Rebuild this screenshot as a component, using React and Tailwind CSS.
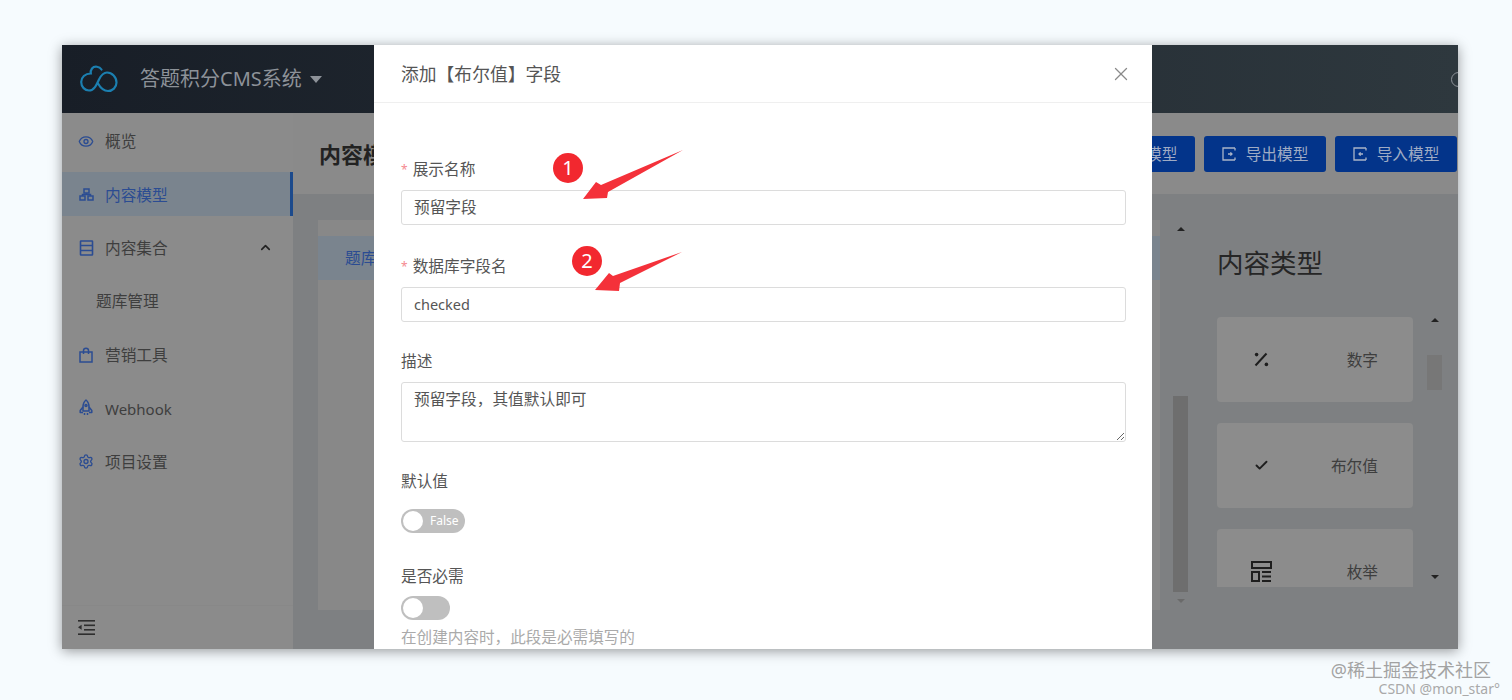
import React from "react";
import { Eye, ChevronUp, Settings, X, Check } from "lucide-react";

const sideFont = "font-['Noto_Sans','Noto_Sans_CJK_SC',sans-serif]";

const CloudLogo = () => (
  <svg width="38" height="28" viewBox="0 0 38 28" fill="none" stroke="#1b7fb0" strokeWidth="2.2" strokeLinecap="round">
    <path d="M21.5 4.5C19.5 1.5 14.5 0.5 12 3.5C10.5 5.5 10.5 7 10.8 8.5C5 8.5 1.2 12.5 1.2 17C1.2 22 5 25.5 9 25.5C14 25.5 16.5 20 19 14.5C21 10.5 23.5 7.5 27 7.5C32 7.5 36.5 12 36.5 17.5C36.5 22.5 32.5 26 28 26C23.5 26 20 22 18 18.5" />
  </svg>
);

const SitemapIcon = () => (
  <svg width="15" height="13" viewBox="0 0 15 13" fill="none" stroke="#2b4c92" strokeWidth="1.5">
    <rect x="5" y="1" width="5" height="4" />
    <rect x="1" y="8" width="5" height="4" />
    <rect x="9" y="8" width="5" height="4" />
    <path d="M7.5 5V6.5H3.5V8M7.5 6.5H11.5V8" />
  </svg>
);

const ListBoxIcon = () => (
  <svg width="15" height="16" viewBox="0 0 15 16" fill="none" stroke="#2b4c92" strokeWidth="1.6">
    <rect x="1.5" y="1" width="12" height="14" rx="0.5" />
    <path d="M1.5 5.5H13.5M1.5 10.5H13.5" />
  </svg>
);

const BagIcon = () => (
  <svg width="14" height="16" viewBox="0 0 14 16" fill="none" stroke="#2b4c92" strokeWidth="1.5">
    <rect x="1" y="5" width="12" height="10" />
    <path d="M4.5 7V3.5C4.5 0.5 9.5 0.5 9.5 3.5V7" />
  </svg>
);

const RocketIcon = () => (
  <svg width="14" height="17" viewBox="0 0 14 17" fill="none" stroke="#2b4c92" strokeWidth="1.5" strokeLinejoin="round">
    <path d="M7 1C9.5 3 10 5.5 10 8V12H4V8C4 5.5 4.5 3 7 1Z" />
    <path d="M4 8L1.2 11.5V13.5H4M10 8L12.8 11.5V13.5H10" />
    <path d="M5.5 14V16M8.5 14V16" />
    <circle cx="7" cy="6.5" r="1" />
  </svg>
);

const CollapseIcon = () => (
  <svg width="17" height="15" viewBox="0 0 17 15" fill="#2e2e2e">
    <rect x="0" y="0" width="17" height="1.6" />
    <rect x="6" y="4.5" width="11" height="1.6" />
    <rect x="6" y="9" width="11" height="1.6" />
    <rect x="0" y="13.4" width="17" height="1.6" />
    <path d="M0 7.3L3.6 4.8V9.8Z" />
  </svg>
);

const ExportIcon = ({ flip }) => (
  <svg width="14" height="14" viewBox="0 0 14 14" fill="none" stroke="#aab4c8" strokeWidth="1.3">
    <path d="M13 1H1V13H13M13 1V3.4M13 13V10.6" />
    {flip ? <path d="M10 7H6M7.6 5.4L6 7L7.6 8.6" /> : <path d="M6 7H10M8.4 5.4L10 7L8.4 8.6" />}
  </svg>
);

const PercentIcon = () => (
  <svg width="15" height="15" viewBox="0 0 15 15" fill="#1e1e1e">
    <path d="M1.5 13.5L12.5 1.5" stroke="#1e1e1e" strokeWidth="2" fill="none" />
    <circle cx="2.6" cy="2.6" r="1.8" />
    <circle cx="12.4" cy="12.4" r="1.8" />
  </svg>
);

const EnumIcon = () => (
  <svg width="21" height="21" viewBox="0 0 21 21" fill="none" stroke="#1e1e1e" strokeWidth="2">
    <rect x="1" y="1" width="19" height="6" />
    <rect x="1" y="11" width="7" height="9" />
    <path d="M11 11H20M11 15.5H20M11 20H20" />
  </svg>
);

const sideItems = [
  { label: "概览", icon: <Eye size={17} color="#2b4c92" /> },
  { label: "内容模型", icon: <SitemapIcon />, active: true },
  { label: "内容集合", icon: <ListBoxIcon />, open: true },
  { label: "题库管理", sub: true },
  { label: "营销工具", icon: <BagIcon /> },
  { label: "Webhook", icon: <RocketIcon />, latin: true },
  { label: "项目设置", icon: <Settings size={17} color="#2b4c92" /> },
];

const typeCards = [
  { label: "数字", icon: <PercentIcon /> },
  { label: "布尔值", icon: <Check size={15} color="#1e1e1e" strokeWidth={3} /> },
  { label: "枚举", icon: <EnumIcon /> },
];

const Triangle = ({ down, className }) => (
  <div
    className={
      "w-0 h-0 border-x-[4px] border-x-transparent " +
      (down ? "border-t-[4px] " : "border-b-[4px] ") +
      className
    }
  />
);

const Field = ({ label, required, className, children }) => (
  <div className={className}>
    <div className="flex items-center h-[22px] pt-[2px] text-[15.7px] text-[#555]">
      {required && <span className="text-[#f58a90] mr-[5px] text-[12px] leading-none">*</span>}
      <label>{label}</label>
    </div>
    {children}
  </div>
);

const inputClass =
  "block w-full h-[35px] mt-[10px] px-[12px] pb-[2px] border border-[#dcdcdc] rounded-[3px] text-[#555] bg-white outline-none";

const Sidebar = () => (
  <aside className="w-[231px] shrink-0 bg-[#8b8b8b] flex flex-col">
    <nav className="flex-1 flex flex-col gap-[9.4px] pt-[6px]">
      {sideItems.map((item) => (
        <div
          key={item.label}
          className={
            "h-[44px] flex items-center " +
            (item.latin ? "text-[15px] " : "text-[15.7px] ") +
            (item.active
              ? "bg-[#7a848e] border-r-[3px] border-[#1c4a8c] text-[#2b4c92] pl-[16px] pr-[20px]"
              : "text-[#3e3e3e] " + (item.sub ? "pl-[34px] pr-[20px]" : "pl-[16px] pr-[20px]"))
          }
        >
          {item.icon && <span className="w-[16px] flex justify-center mr-[11px]">{item.icon}</span>}
          <span className="pt-[2px]">{item.label}</span>
          {item.open && <ChevronUp size={15} color="#222" strokeWidth={2.6} className="ml-auto" />}
        </div>
      ))}
    </nav>
    <div className="h-[44px] border-t border-[#888] flex items-center pl-[16px]">
      <CollapseIcon />
    </div>
  </aside>
);

const MainContent = () => (
  <main className="flex-1 min-w-0 flex flex-col bg-[#7e8082]">
    <div className="h-[81px] shrink-0 bg-[#8a8a8a] flex items-center pl-[26px] pr-px">
      <h1 className="pt-[2px] text-[22px] font-bold text-[#222] whitespace-nowrap">内容模型</h1>
      <div className="ml-auto flex gap-[9px]">
        {["新建模型", "导出模型", "导入模型"].map((text, i) => (
          <button
            key={text}
            className="w-[122px] h-[36px] rounded-[3px] bg-[#03348a] text-[#9fabc4] text-[15.7px] flex items-center justify-center gap-[10px]"
          >
            <ExportIcon flip={i === 2} />
            <span className="pt-[2px]">{text}</span>
          </button>
        ))}
      </div>
    </div>
    <div className="flex-1 min-h-0 flex pt-[26px] pl-[25px]">
      <div className="w-[842px] h-[390px] shrink-0 bg-[#888888] pt-[16px]">
        <div className="h-[44px] bg-[#7a848e] flex items-center pl-[27px] pt-[2px] text-[15.7px] text-[#2b4c92]">题库</div>
      </div>
      <div className="w-[15px] ml-[13px] h-[384px] flex flex-col items-center pt-[7px]">
        <Triangle className="border-b-[#222]" />
        <div className="w-[15px] h-[196px] bg-[#6e6e6e] mt-[165px]" />
        <Triangle down className="border-t-[#6a6a6a] mt-[7px]" />
      </div>
      <div className="ml-[29px] w-[196px] shrink-0">
        <h2 className="text-[26.5px] text-[#262626] leading-[38px] mt-[24px] whitespace-nowrap">内容类型</h2>
        <div className="mt-[35px] h-[270px] overflow-hidden flex flex-col gap-[21px]">
          {typeCards.map((card) => (
            <div
              key={card.label}
              className="h-[85px] shrink-0 rounded-[4px] bg-[#8c8c8c] flex items-center justify-between pl-[34px] pr-[35px] text-[15.7px] text-[#3e3e3e]"
            >
              <span className="w-[21px] flex justify-center">{card.icon}</span>
              <span className="pt-[3px]">{card.label}</span>
            </div>
          ))}
        </div>
      </div>
      <div className="ml-[14px] w-[15px] flex flex-col items-center pt-[98px]">
        <Triangle className="border-b-[#222]" />
        <div className="w-[15px] h-[35px] bg-[#777] mt-[33px]" />
        <Triangle down className="border-t-[#222] mt-[185px]" />
      </div>
    </div>
  </main>
);

const Modal = () => (
  <section className="absolute top-0 bottom-0 left-[312px] w-[778px] bg-white overflow-hidden">
    <header className="h-[58px] border-b border-[#efefef] flex items-center justify-between pl-[27px] pr-[20px]">
      <h3 className="pt-[1px] text-[17.8px] text-[#555]">添加【布尔值】字段</h3>
      <X size={22} color="#8a8a8a" strokeWidth={1.4} />
    </header>
    <div className="pt-[55px] pl-[27px] pr-[26px]">
      <Field label="展示名称" required>
        <input className={inputClass + " text-[15.7px]"} defaultValue="预留字段" readOnly />
      </Field>
      <Field label="数据库字段名" required className="mt-[30px]">
        <input className={inputClass + " text-[14.5px]"} defaultValue="checked" readOnly />
      </Field>
      <Field label="描述" className="mt-[28px]">
        <textarea
          className="block w-full h-[60px] mt-[10px] px-[12px] py-[5px] border border-[#dcdcdc] rounded-[3px] text-[15.7px] leading-[22px] text-[#555] bg-white outline-none"
          defaultValue="预留字段，其值默认即可"
          readOnly
        />
      </Field>
      <Field label="默认值" className="mt-[28px]">
        <div className="mt-[17px] w-[64px] h-[24px] rounded-full bg-[#bfbfbf] flex items-center pl-[2px]">
          <span className="w-[20px] h-[20px] rounded-full bg-white" />
          <span className="ml-[7px] text-[12px] text-white">False</span>
        </div>
      </Field>
      <Field label="是否必需" className="mt-[32px]">
        <div className="mt-[9px] w-[49px] h-[24px] rounded-full bg-[#bfbfbf] flex items-center pl-[2px]">
          <span className="w-[20px] h-[20px] rounded-full bg-white" />
        </div>
        <p className="mt-[6px] text-[15.6px] leading-[22px] text-[#aaa]">在创建内容时，此段是必需填写的</p>
      </Field>
    </div>
  </section>
);

// red callouts drawn over the dialog
const Callout = ({ n, className }) => (
  <span
    className={
      "absolute w-[30px] h-[30px] rounded-full bg-[#f2282f] text-white text-[20px] flex items-center justify-center " +
      className
    }
  >
    {n}
  </span>
);

const Arrows = () => (
  <svg className="absolute left-0 top-0 pointer-events-none" width="1396" height="604" fill="#f4313a">
    <polygon points="521,154 534,137 539,140 621,105 546,147 545,153" />
    <polygon points="533,245 547,228 551,231 620,207 558,238 557,246" />
  </svg>
);

export default function App() {
  return (
    <div className={"w-[1512px] h-[700px] overflow-hidden bg-[#f6fbfe] pt-[45px] " + sideFont}>
      <div className="relative ml-[62px] w-[1396px] h-[604px] shadow-[0_2px_12px_rgba(0,0,0,0.4)] flex flex-col overflow-hidden">
        <header className="h-[68px] shrink-0 bg-gradient-to-r from-[#181e27] to-[#2e383e] flex items-center pl-[18px]">
          <CloudLogo />
          <span className="ml-[22px] text-[20px] text-[#8d9299]">答题积分CMS系统</span>
          <span className="ml-[8px] w-0 h-0 border-x-[6px] border-x-transparent border-t-[7px] border-t-[#8d9299]" />
          <span className="ml-auto mr-[-8px] w-[15px] h-[15px] rounded-full border border-[#8d9299]" />
        </header>
        <div className="flex-1 min-h-0 flex">
          <Sidebar />
          <MainContent />
        </div>
        <Modal />
        <Arrows />
        <Callout n="1" className="left-[491px] top-[108px]" />
        <Callout n="2" className="left-[510px] top-[201px]" />
      </div>
      <div className="flex flex-col items-end pt-[11px]">
        <span className="mr-[21px] text-[18px] leading-[20px] text-[#a3a3a3] whitespace-nowrap">@稀土掘金技术社区</span>
        <span className="mr-[12px] text-[14px] leading-[18px] text-[#a9a9a9] whitespace-nowrap">CSDN @mon_star°</span>
      </div>
    </div>
  );
}
